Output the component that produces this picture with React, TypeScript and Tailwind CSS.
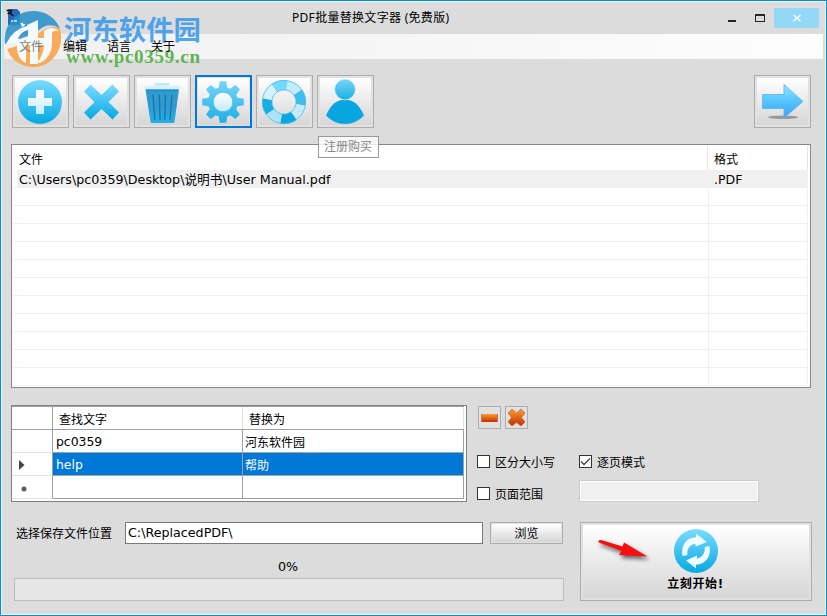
import { useState } from "react";
import type { ReactNode } from "react";
import clsx from "clsx";

const menuItems = [
  { label: "文件", cls: "text-[#7d7f80]" },
  { label: "编辑", cls: "" },
  { label: "语言", cls: "" },
  { label: "关于", cls: "" },
];

const replaceRows = [
  { find: "pc0359", replace: "河东软件园" },
  { find: "help", replace: "帮助" },
  { find: "", replace: "" },
];

const emptyRows = Array.from({ length: 11 });

/* Shared gradients */
function Gradients() {
  return (
    <svg className="absolute h-0 w-0" aria-hidden="true">
      <defs>
        <linearGradient id="blue" x1="0" y1="0" x2="0" y2="1">
          <stop offset="0" stopColor="#7bdcff" />
          <stop offset="1" stopColor="#05a8e2" />
        </linearGradient>
        <linearGradient id="gear" x1="0" y1="0" x2="0" y2="1">
          <stop offset="0" stopColor="#76d6fa" />
          <stop offset="1" stopColor="#1eaee4" />
        </linearGradient>
        <linearGradient id="pale" x1="0" y1="0" x2="0" y2="1">
          <stop offset="0" stopColor="#ffffff" />
          <stop offset="1" stopColor="#c5eafb" />
        </linearGradient>
        <linearGradient id="arrow" x1="0" y1="0" x2="0" y2="1">
          <stop offset="0" stopColor="#8fe9ff" />
          <stop offset="0.5" stopColor="#55c4ff" />
          <stop offset="1" stopColor="#3aa2fc" />
        </linearGradient>
        <linearGradient id="orange" x1="0" y1="0" x2="0" y2="1">
          <stop offset="0" stopColor="#f9a02f" />
          <stop offset="1" stopColor="#c62c02" />
        </linearGradient>
        <linearGradient id="bin" x1="0" y1="0" x2="0" y2="1">
          <stop offset="0" stopColor="#2e9ccd" />
          <stop offset="0.5" stopColor="#3199d2" />
          <stop offset="1" stopColor="#22b0e6" />
        </linearGradient>
      </defs>
    </svg>
  );
}

function AddIcon() {
  return (
    <svg width="51" height="47" viewBox="0 0 51 47">
      <circle cx="25" cy="24" r="22" fill="url(#blue)" />
      <path d="M21 12h8v8h8v8h-8v8h-8v-8h-8v-8h8z" fill="url(#pale)" />
    </svg>
  );
}

function RemoveIcon() {
  return (
    <svg width="51" height="47" viewBox="0 0 51 47">
      <path
        d="M14.500 6.500L25.500 17L36.500 6.500L43 13.500L32.500 24L43 34.500L36.500 41.500L25.500 31L14.500 41.500L8 34.500L18.500 24L8 13.500Z"
        fill="url(#blue)"
      />
    </svg>
  );
}

function TrashIcon() {
  return (
    <svg width="51" height="47" viewBox="0 0 51 47">
      <path d="M18 6.500q0-1 2-1h10q2 0 2 1v1.500h9.500q1.500 0 1.500 2v1.500H7.500V10q0-2 1.500-2h9z" fill="#d3f1fc" />
      <path d="M17.500 6h15" stroke="#b4e7fa" strokeWidth="1.500" />
      <path d="M8.500 11.500h33.500L37.500 44q-.3 1-1.500 1H15q-1.200 0-1.500-1z" fill="url(#bin)" />
      <path d="M9.500 12.500h31.500" stroke="#2590c4" strokeWidth="2" />
      <path
        d="M16 17l1.800 24.500M22.300 17l.7 24.500M28.500 17l-.7 24.500M35 17l-2 24.500"
        stroke="#1a75a5"
        strokeWidth="1.300"
        strokeLinecap="round"
      />
    </svg>
  );
}

function GearIcon() {
  return (
    <svg width="51" height="47" viewBox="0 0 51 47">
      <g transform="translate(25 24)">
        <path
          fill="url(#gear)"
          d="M-3.300 -20.800H3.300L4.200 -14.400L7.200 -13.200L12.400 -17L17 -12.400L13.200 -7.200L14.400 -4.200L20.800 -3.300V3.300L14.400 4.200L13.200 7.200L17 12.400L12.400 17L7.200 13.200L4.200 14.400L3.300 20.800H-3.300L-4.200 14.400L-7.200 13.200L-12.400 17L-17 12.400L-13.200 7.200L-14.400 4.200L-20.800 3.300V-3.300L-14.400 -4.200L-13.200 -7.200L-17 -12.400L-12.400 -17L-7.200 -13.200L-4.200 -14.400Z"
        />
        <circle r="9.800" fill="url(#pale)" stroke="#4bbde9" strokeWidth="0.800" />
      </g>
    </svg>
  );
}

function LifebuoyIcon() {
  const colors = ["#c4ebfc", "#3dbdee", "#c4ebfc", "#0aa6e0", "#aee3f9", "#18ade5", "#d4f1fd", "#74d7fb"];
  return (
    <svg width="51" height="47" viewBox="0 0 51 47">
      <g transform="translate(25 24) rotate(10)">
        {colors.map((color, i) => (
          <path
            key={i}
            d="M0 -22A22 22 0 0 1 15.560 -15.560L8.490 -8.490A12 12 0 0 0 0 -12Z"
            fill={color}
            transform={`rotate(${i * 45})`}
          />
        ))}
        <circle r="21.600" fill="none" stroke="#4cc1ed" strokeWidth="0.800" />
        <circle r="12.200" fill="none" stroke="#4cc1ed" strokeWidth="0.800" />
      </g>
    </svg>
  );
}

function UserIcon() {
  return (
    <svg width="51" height="47" viewBox="0 0 51 47">
      <path d="M6 37.500C11 26 17 21.700 25 21.700S39 26 44 37.500Q36 46 25 46T6 37.500z" fill="#08a6e0" />
      <circle cx="25" cy="11.500" r="10.400" fill="url(#gear)" stroke="#e8f7fd" strokeWidth="0.600" />
    </svg>
  );
}

function NextIcon() {
  return (
    <svg width="51" height="47" viewBox="0 0 51 47">
      <ellipse cx="26" cy="39.300" rx="15" ry="1.800" fill="#999" />
      <path d="M5.500 16.500h21.500v-10L46 23.500L27 40V30.500H5.500z" fill="url(#arrow)" stroke="#65b6ee" strokeWidth="0.900" />
    </svg>
  );
}

function StartIcon() {
  return (
    <svg className="block" width="44" height="44" viewBox="0 0 44 44">
      <circle cx="22" cy="22" r="22" fill="url(#blue)" />
      <g fill="#eefaff">
        <path d="M8.500 27C6.500 17 12 8.500 22 8.300V4.500L33 13L21.500 17.500V15C16 15.500 12.500 20 13.500 26z" />
        <path d="M35.500 17C37.500 27 32 35.500 22 35.700V39.500L12 31.500L23 26.500V29.500C28 28.500 31.500 24 30.700 18z" />
      </g>
    </svg>
  );
}

const tools = [
  { name: "add", icon: <AddIcon /> },
  { name: "remove", icon: <RemoveIcon /> },
  { name: "clear", icon: <TrashIcon /> },
  { name: "settings", icon: <GearIcon /> },
  { name: "help", icon: <LifebuoyIcon /> },
  { name: "register", icon: <UserIcon /> },
];

function ToolButton({ children, active, label }: { children: ReactNode; active?: boolean; label: string }) {
  return (
    <button
      aria-label={label}
      className={clsx(
        "block h-[53px] w-[57px] shrink-0 bg-[#e1e1e1]",
        active ? "border-2 border-[#0078d7] p-px" : "border border-[#adadad] p-[2px]"
      )}
    >
      <span className="block h-[47px] w-[51px] bg-linear-to-b from-white to-[#d6d6d6]">{children}</span>
    </button>
  );
}

function CheckBox({ label, checked, onChange }: { label: string; checked: boolean; onChange: () => void }) {
  return (
    <button role="checkbox" aria-checked={checked} onClick={onChange} className="flex h-[13px] items-center gap-[5px] whitespace-nowrap">
      <span className="block h-[13px] w-[13px] border border-[#333] bg-white">
        {checked && (
          <svg className="block" width="11" height="11" viewBox="0 0 11 11">
            <path d="M1 5.500l3 3L10 2.500" fill="none" stroke="#444" strokeWidth="1.300" />
          </svg>
        )}
      </span>
      <span className="pt-[2px]">{label}</span>
    </button>
  );
}

/* Site logo laid over the title and menu bars */
function Watermark() {
  return (
    <div className="pointer-events-none absolute -left-px -top-px h-[72px] w-[210px]">
      <svg className="absolute left-0 top-0" width="66" height="72" viewBox="0 0 66 72">
        <path d="M8 9h9l3 3v13H8z" fill="#2469b8" />
        <path d="M5 44C3 26 15 11 33 11c13 0 23 7 27 18-8-6-15-4-21 1L28 36 5 44z" fill="#2a91ca" fillOpacity=".88" />
        <path d="M60 29c5 19-7 36-24 38-14 1-25-7-29-18 14-3 20-8 32-16 9-6 16-8 21-4z" fill="#f8a54d" fillOpacity=".92" />
        <path
          d="M6 44Q13 29 27 26v-1L38 20V38h6V31Q52 25 59 31 52 30 52 34v8q0 15-12 21h-3q7-9 7-18h-6v19h-8V45h-4v18q-8-3-9-14v-4Q12 42 6 44zM28 30Q20 32 18 39h10z"
          fill="#f5fafc"
          fillRule="evenodd"
        />
        <path d="M22 22l1.500 2 2 .5-1.500 1.500-2 1-.5-2-1.500-1.500 2-.5z" fill="#fff" />
        <path d="M6.500 10.500h5l-1 3 3 2.500M7.500 13.500l4-1" stroke="#111" strokeWidth="1.500" fill="none" />
        <path d="M11 21h2m1 0h3" stroke="#d9ebf8" strokeWidth="1.500" />
      </svg>
      <div className="absolute left-[64px] top-[12px] whitespace-nowrap font-['Noto_Sans_CJK_SC',sans-serif] text-[27.400px] font-bold leading-[32px] text-[#479fe9]/95">
        河东软件园
      </div>
      <div className="absolute left-[66px] top-[47px] whitespace-nowrap font-['Liberation_Serif',serif] text-[19px] font-bold leading-[20px] tracking-[0.700px] text-[#5cb651]">
        www.pc0359.cn
      </div>
    </div>
  );
}

export default function App() {
  const [matchCase, setMatchCase] = useState(false);
  const [pageMode, setPageMode] = useState(true);
  const [pageRange, setPageRange] = useState(false);
  const [selected, setSelected] = useState(1);

  return (
    <div className="relative flex h-[616px] w-[827px] flex-col overflow-hidden border border-[#008fca] bg-[#dcdcdc] font-['DejaVu_Sans','Noto_Sans_CJK_SC',sans-serif] text-[12px] leading-[16px] text-black shadow-[inset_0_0_0_1px_#f0f0f0]">
      <Gradients />

      {/* Title bar */}
      <header className="flex h-[33px] shrink-0 items-start pl-[291px] pr-[7px]">
        <h1 className="mt-[9px] whitespace-nowrap font-['Noto_Sans','Noto_Sans_CJK_SC',sans-serif] tracking-[0.300px]">
          PDF批量替换文字器 (免费版)
        </h1>
        <div className="ml-auto mt-[7px] flex h-5 items-start">
          <div className="mr-[19px] mt-3 h-[2px] w-2 bg-[#262626]" />
          <div className="mr-[9px] mt-[6px] h-2 w-[10px] border border-t-2 border-[#262626]" />
          <div className="flex h-5 w-[45px] items-center justify-center bg-[#93d8f7]">
            <svg width="8" height="8" viewBox="0 0 8 8">
              <path d="M.5 1l7 6m0-6l-7 6" stroke="#fff" strokeWidth="1.400" />
            </svg>
          </div>
        </div>
      </header>

      {/* Menu bar */}
      <nav className="mx-[3px] flex h-[25px] shrink-0 items-center bg-linear-to-r from-[#f0f0f0] to-[#fdfdfd] pl-[15px]">
        {menuItems.map((item) => (
          <span key={item.label} className={clsx("relative z-10 w-[44px]", item.cls)}>
            {item.label}
          </span>
        ))}
      </nav>

      {/* Toolbar */}
      <div className="mt-4 flex h-[53px] shrink-0 gap-1 pl-[11px] pr-[15px]">
        {tools.map((tool) => (
          <ToolButton key={tool.name} label={tool.name} active={tool.name === "settings"}>
            {tool.icon}
          </ToolButton>
        ))}
        <div className="ml-auto">
          <ToolButton label="next">
            <NextIcon />
          </ToolButton>
        </div>
      </div>

      {/* File list */}
      <section className="ml-[10px] mt-4 h-[244px] w-[800px] shrink-0 overflow-hidden border border-[#828790] bg-white pl-px pr-[2px]">
        <div className="flex h-[25px] pt-px">
          <div className="w-[695px] border-r border-[#e5e5e5] pl-[6px] pt-[6px]">文件</div>
          <div className="w-[100px] border-r border-[#e5e5e5] pl-[6px] pt-[6px]">格式</div>
        </div>
        <div className="flex h-[18px] border-b border-[#f0f0f0]">
          <div className="ml-1 w-[692px] whitespace-pre bg-[#f0f0f0] pl-[2px] text-[12.700px] leading-[19px]">
            C:\Users\pc0359\Desktop\说明书\User Manual.pdf
          </div>
          <div className="flex-1 bg-[#f0f0f0] pl-[5px] text-[12.500px] leading-[19px]">.PDF</div>
        </div>
        {emptyRows.map((_, i) => (
          <div key={i} className="flex h-[18px] border-b border-[#f0f0f0]">
            <div className="w-[696px] border-r border-[#f0f0f0]" />
            <div className="flex-1 border-r border-[#f0f0f0]" />
          </div>
        ))}
      </section>

      {/* Replacement pairs and options */}
      <div className="ml-[10px] mt-[17px] flex h-[97px] shrink-0">
        <section className="w-[456px] border border-[#828282] bg-white">
          <div className="mr-[2px] flex h-6 border-b border-t border-[#a0a0a0]">
            <div className="w-[41px] border-r border-[#a0a0a0]" />
            <div className="w-[190px] border-r border-[#e0e0e0] pl-[6px] leading-[26px]">查找文字</div>
            <div className="flex-1 border-r border-[#e0e0e0] pl-[6px] leading-[26px]">替换为</div>
          </div>
          {replaceRows.map((row, i) => (
            <div key={i} onClick={() => setSelected(i)} className="mr-[2px] flex h-[23px]">
              <div className="flex w-[41px] items-center border-b border-r border-b-[#e5e5e5] border-r-[#a0a0a0] pl-[7px]">
                {i === 1 && (
                  <svg width="6" height="10" viewBox="0 0 6 10" className="mt-[2px]">
                    <path d="M0 0l5.500 5L0 10z" fill="#444" />
                  </svg>
                )}
                {i === 2 && (
                  <svg width="6" height="6" viewBox="0 0 6 6" className="ml-[2px] mt-1">
                    <circle cx="3" cy="3" r="1.800" fill="#444" />
                    <path d="M3 0v6M0 3h6M.8 .8l4.400 4.400M5.200 .8L.8 5.200" stroke="#555" strokeWidth="1" />
                  </svg>
                )}
              </div>
              <div
                className={clsx(
                  "w-[190px] border-b border-r border-[#a0a0a0] pl-[3px] text-[12.400px] leading-[23px]",
                  selected === i && "bg-[#0078d7] text-white"
                )}
              >
                {row.find}
              </div>
              <div
                className={clsx(
                  "h-[23px] flex-1 border-b border-r border-[#a0a0a0] pl-[2px] leading-[26px]",
                  selected === i && "bg-[#0078d7] text-white"
                )}
              >
                {row.replace}
              </div>
            </div>
          ))}
        </section>

        <section className="ml-[10px] flex flex-col">
          <div className="ml-px mt-px flex gap-1">
            <button aria-label="delete row" className="h-[23px] w-[23px] border border-[#adadad] bg-[#e1e1e1]">
              <svg className="block" width="21" height="21" viewBox="0 0 21 21">
                <rect x="2" y="7" width="17" height="8" fill="url(#orange)" />
                <path d="M2.500 7v8M18.500 7v8" stroke="#d0744d" />
              </svg>
            </button>
            <button aria-label="delete all rows" className="h-[23px] w-[23px] border border-[#adadad] bg-[#e1e1e1]">
              <svg className="block" width="21" height="21" viewBox="0 0 21 21">
                <path
                  d="M6 2L10.500 6L15 2L19 6L15.500 10.500L19 15L15 19L10.500 15.500L6 19L2 15L5.500 10.500L2 6Z"
                  fill="url(#orange)"
                  stroke="#ce6440"
                  strokeWidth="0.800"
                  strokeLinejoin="round"
                />
              </svg>
            </button>
          </div>
          <div className="mt-[26px] flex">
            <div className="w-[102px]">
              <CheckBox label="区分大小写" checked={matchCase} onChange={() => setMatchCase(!matchCase)} />
            </div>
            <CheckBox label="逐页模式" checked={pageMode} onChange={() => setPageMode(!pageMode)} />
          </div>
          <div className="mt-3 flex">
            <div className="w-[102px] pt-[7px]">
              <CheckBox label="页面范围" checked={pageRange} onChange={() => setPageRange(!pageRange)} />
            </div>
            <div className="h-[22px] w-[180px] border border-[#ccc] bg-[#f0f0f0] shadow-[inset_0_0_0_1px_#fff]" />
          </div>
        </section>
      </div>

      {/* Output folder, progress and start */}
      <div className="ml-[13px] mt-5 flex h-[79px] shrink-0">
        <div className="flex w-[550px] flex-col">
          <div className="flex h-[22px]">
            <span className="w-[111px] pl-[2px] leading-[24px]">选择保存文件位置</span>
            <div className="w-[358px] border border-[#7a7a7a] bg-white pl-[2px] text-[12.700px] leading-[20px]">C:\ReplacedPDF\</div>
            <button className="ml-[7px] h-[22px] w-[73px] border border-[#adadad] bg-[#e1e1e1] p-px">
              <span className="block h-[18px] bg-linear-to-b from-white to-[#d6d6d6] leading-[20px]">浏览</span>
            </button>
          </div>
          <div className="mt-[14px] h-[20px] pr-[2px] text-center text-[12.700px] leading-[17px]">0%</div>
          <div className="h-[23px] border border-[#bcbcbc] bg-[#e6e6e6]" />
        </div>
        <button className="relative ml-4 h-[79px] w-[232px] border border-[#adadad] bg-[#e1e1e1] p-[2px]">
          <span className="flex h-[73px] flex-col items-center bg-linear-to-b from-white to-[#d6d6d6] pt-1">
            <StartIcon />
            <span className="mr-px mt-[3px] font-bold tracking-[0.600px]">立刻开始!</span>
          </span>
          <svg className="absolute left-[12px] top-[10px]" width="60" height="32" viewBox="0 0 60 32">
            <path
              d="M5.500 8Q6 6.500 8 7L29.500 13.500L31 9.500L54.500 23.500L26 22L28.500 18L7 10Q5 9.500 5.500 8z"
              fill="#fb0d0d"
              className="drop-shadow-[2px_3px_2px_rgba(0,0,0,0.6)]"
            />
          </svg>
        </button>
      </div>

      {/* Tooltip */}
      <div className="absolute left-[317px] top-[135px] h-[22px] w-[61px] border border-[#9a9a9a] bg-white/80 pl-[5px] leading-[21px] text-[#858585]">
        注册购买
      </div>

      <Watermark />
    </div>
  );
}
